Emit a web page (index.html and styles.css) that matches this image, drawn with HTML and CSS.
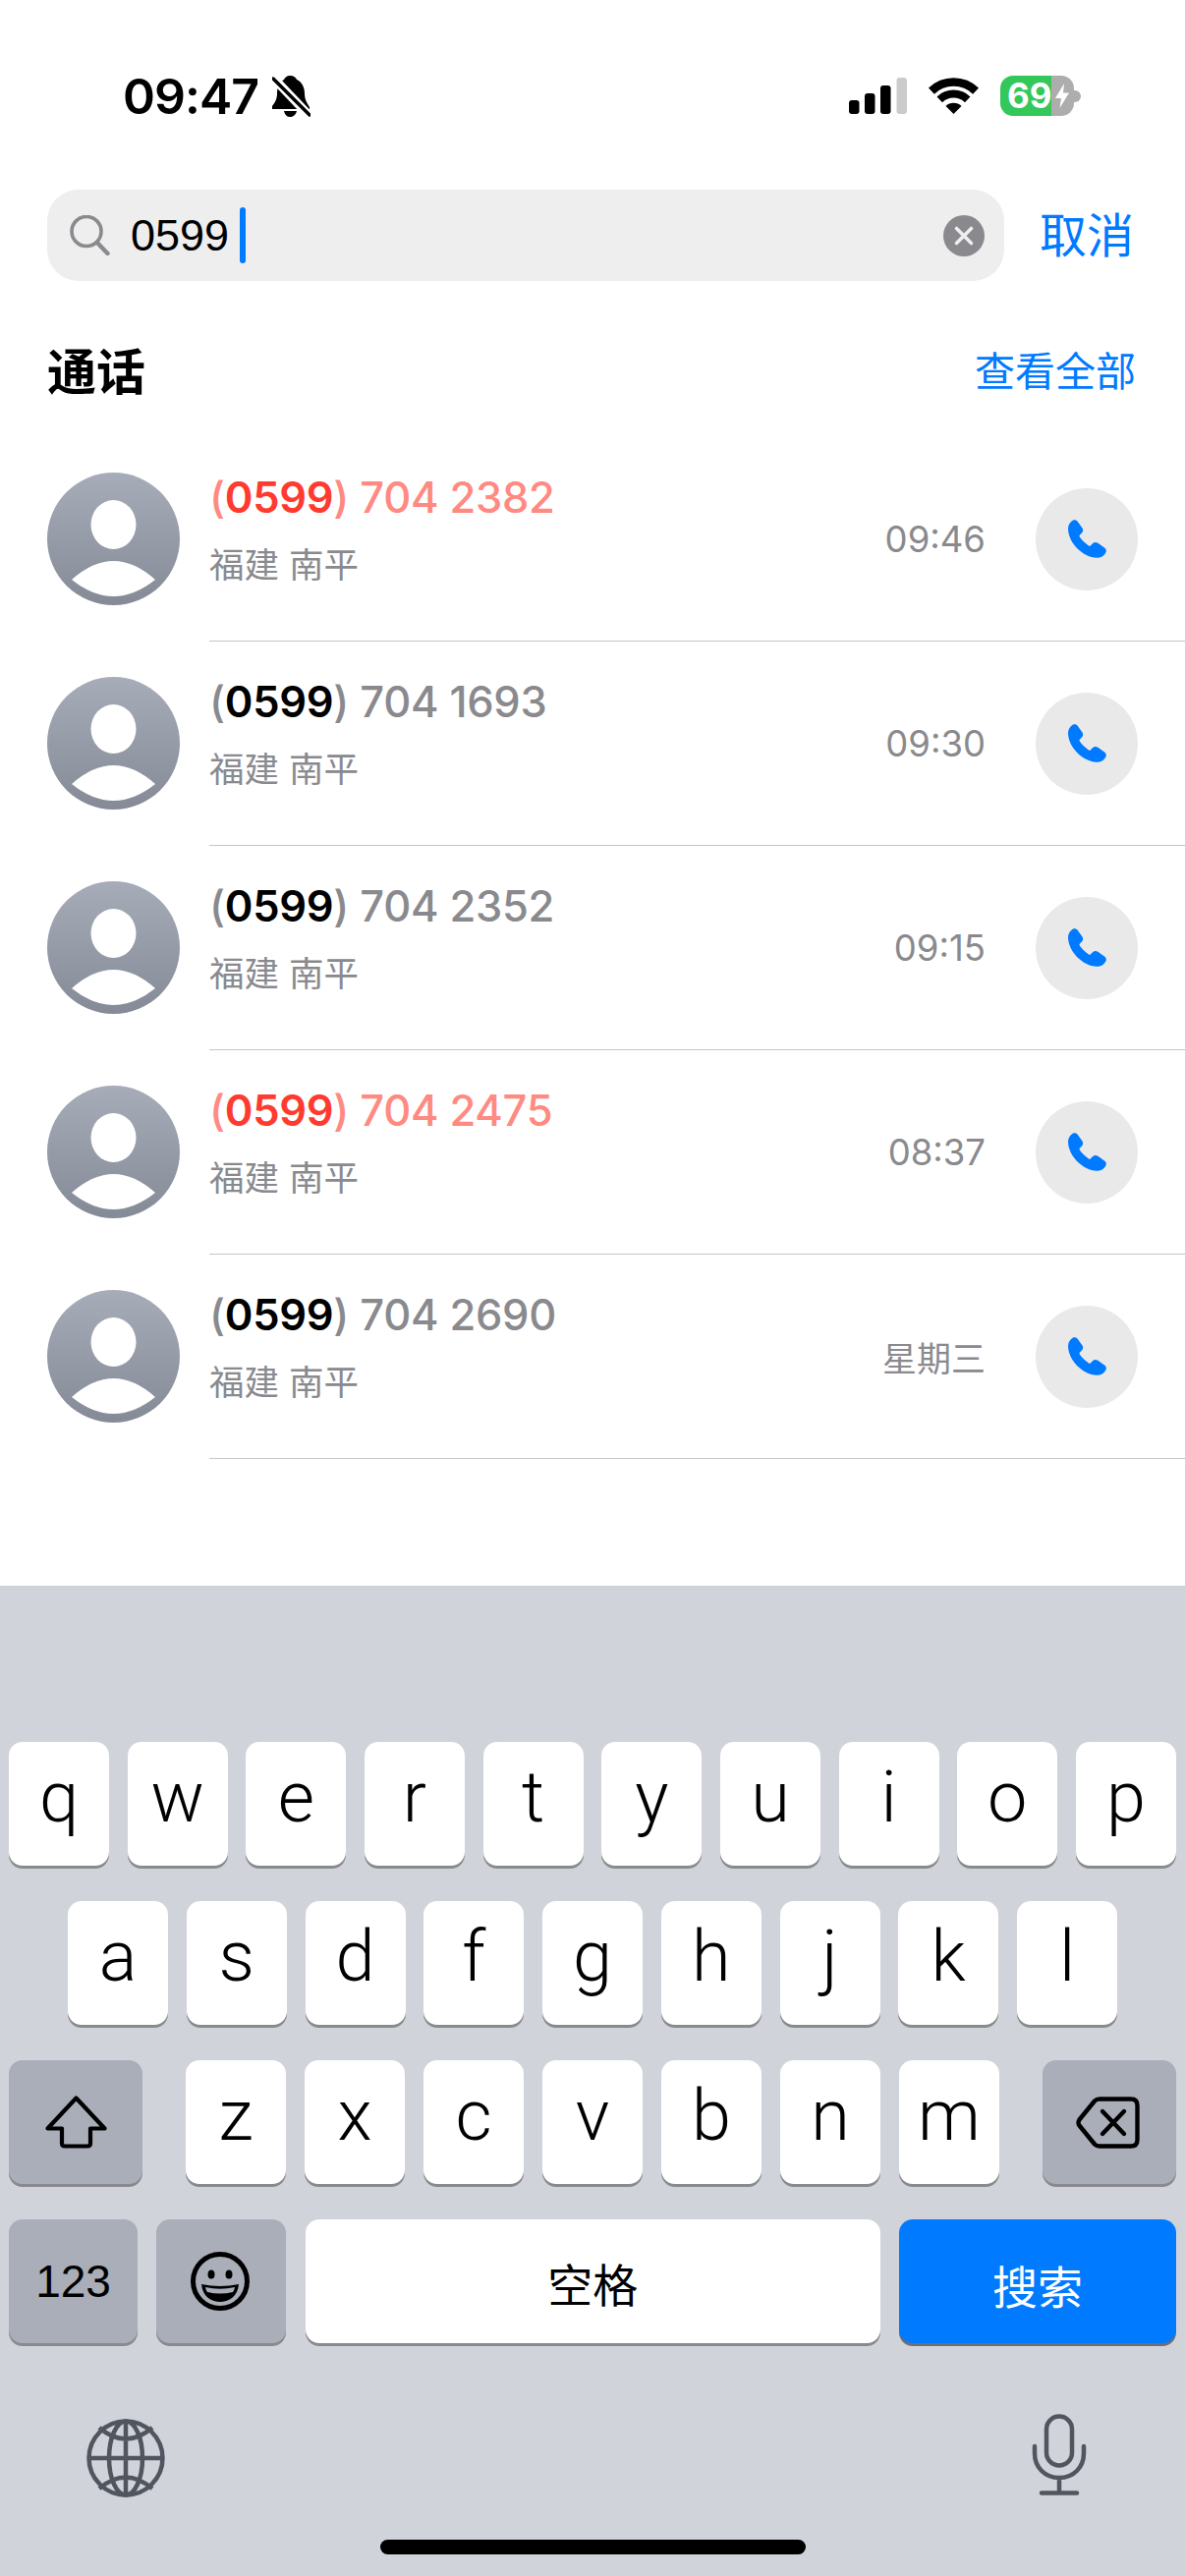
FILE: index.html
```html
<!DOCTYPE html>
<html lang="zh-Hans">
<head>
  <meta charset="UTF-8">
  <title>通话搜索</title>
  <link rel="stylesheet" href="styles.css">
</head>
<body>
  <div class="phone">
    <div class="status-bar">
      <div class="status-left">
        <span class="clock">09:47</span>
        <svg class="bell" viewBox="0 0 39 42">
          <path d="M18 0C22 0 24 2 25 4C30 6 33 12 33 18C33 24 35 27 38 32L38 34L0 34L0 31C3 27 5 24 5 18C5 12 8 6 12 4C13 2 15 0 18 0Z"/>
          <path d="M12 36H25C24 40 21 42 18 42C15 42 13 40 12 36Z"/>
          <path d="M-1 0L39 42" stroke="#fff" stroke-width="9"/>
          <path d="M1 3L38 40" stroke="#000" stroke-width="3.4" stroke-linecap="round"/>
        </svg>
      </div>
      <div class="status-right">
        <svg class="signal" viewBox="0 0 59 37">
          <rect x="0" y="23" width="10.5" height="14" rx="3"/>
          <rect x="16" y="16" width="10.5" height="21" rx="3"/>
          <rect x="32" y="8" width="10.5" height="29" rx="3"/>
          <rect x="48.5" y="0" width="10.5" height="37" rx="3" fill="#cbcbcb"/>
        </svg>
        <svg class="wifi" viewBox="0 0 51 37">
          <path d="M2.9 13.6A32.5 32.5 0 0 1 48.1 13.6" fill="none" stroke="#000" stroke-width="8.5"/>
          <path d="M11.3 22.3A20.5 20.5 0 0 1 39.7 22.3" fill="none" stroke="#000" stroke-width="8"/>
          <path d="M25.5 37L17.5 29A11.3 11.3 0 0 1 33.5 29Z"/>
        </svg>
        <div class="battery">
          <span class="battery-level">69</span>
          <svg class="bolt" viewBox="0 0 14 25"><path d="M9 0L0 15H6L4.500 25L14 9.500H8Z"/></svg>
        </div>
        <span class="battery-nub"></span>
      </div>
    </div>

    <div class="search-row">
      <div class="search-box">
        <svg class="search-icon" viewBox="0 0 41 41">
          <circle cx="17" cy="16.500" r="15" fill="none" stroke="#8a8a8e" stroke-width="3.600"/>
          <path d="M28 28L38.500 39" stroke="#8a8a8e" stroke-width="4.400" stroke-linecap="round"/>
        </svg>
        <span class="search-text">0599</span>
        <span class="caret"></span>
        <svg class="clear-icon" viewBox="0 0 42 42">
          <circle cx="21" cy="21" r="21" fill="#8a8a8e"/>
          <path d="M13.500 13.500L28.500 28.500M28.500 13.500L13.500 28.500" stroke="#eee" stroke-width="3.600" stroke-linecap="round"/>
        </svg>
      </div>
      <span class="cancel">取消</span>
    </div>

    <div class="section-head">
      <span class="section-title">通话</span>
      <span class="section-link">查看全部</span>
    </div>

    <div class="call-list">
      <div class="call-row">
        <div class="avatar">
          <svg viewBox="0 0 135 135"><ellipse cx="67.500" cy="53" rx="23" ry="25" fill="#fff"/><path d="M25 109Q67.500 71 110 109Q67.500 143 25 109Z" fill="#fff"/></svg>
        </div>
        <div class="call-main">
          <div class="call-info">
            <div class="number missed"><span class="dim">(</span>0599<span class="dim">) 704 2382</span></div>
            <div class="place">福建 南平</div>
          </div>
          <span class="call-time">09:46</span>
          <div class="call-btn">
            <svg viewBox="0 0 117 116"><path d="M14 2C20-1 26 1 30 6L43 24C47 30 46 35 42 40L36 46C34 48 34 50 36 53C42 62 52 72 62 78C65 80 67 80 69 78L75 72C80 68 85 67 91 71L110 84C116 88 118 94 115 100C110 110 100 116 88 116C45 114 2 72 0 28C0 16 6 7 14 2Z"/></svg>
          </div>
        </div>
      </div>

      <div class="call-row">
        <div class="avatar">
          <svg viewBox="0 0 135 135"><ellipse cx="67.500" cy="53" rx="23" ry="25" fill="#fff"/><path d="M25 109Q67.500 71 110 109Q67.500 143 25 109Z" fill="#fff"/></svg>
        </div>
        <div class="call-main">
          <div class="call-info">
            <div class="number"><span class="dim">(</span>0599<span class="dim">) 704 1693</span></div>
            <div class="place">福建 南平</div>
          </div>
          <span class="call-time">09:30</span>
          <div class="call-btn">
            <svg viewBox="0 0 117 116"><path d="M14 2C20-1 26 1 30 6L43 24C47 30 46 35 42 40L36 46C34 48 34 50 36 53C42 62 52 72 62 78C65 80 67 80 69 78L75 72C80 68 85 67 91 71L110 84C116 88 118 94 115 100C110 110 100 116 88 116C45 114 2 72 0 28C0 16 6 7 14 2Z"/></svg>
          </div>
        </div>
      </div>

      <div class="call-row">
        <div class="avatar">
          <svg viewBox="0 0 135 135"><ellipse cx="67.500" cy="53" rx="23" ry="25" fill="#fff"/><path d="M25 109Q67.500 71 110 109Q67.500 143 25 109Z" fill="#fff"/></svg>
        </div>
        <div class="call-main">
          <div class="call-info">
            <div class="number"><span class="dim">(</span>0599<span class="dim">) 704 2352</span></div>
            <div class="place">福建 南平</div>
          </div>
          <span class="call-time">09:15</span>
          <div class="call-btn">
            <svg viewBox="0 0 117 116"><path d="M14 2C20-1 26 1 30 6L43 24C47 30 46 35 42 40L36 46C34 48 34 50 36 53C42 62 52 72 62 78C65 80 67 80 69 78L75 72C80 68 85 67 91 71L110 84C116 88 118 94 115 100C110 110 100 116 88 116C45 114 2 72 0 28C0 16 6 7 14 2Z"/></svg>
          </div>
        </div>
      </div>

      <div class="call-row">
        <div class="avatar">
          <svg viewBox="0 0 135 135"><ellipse cx="67.500" cy="53" rx="23" ry="25" fill="#fff"/><path d="M25 109Q67.500 71 110 109Q67.500 143 25 109Z" fill="#fff"/></svg>
        </div>
        <div class="call-main">
          <div class="call-info">
            <div class="number missed"><span class="dim">(</span>0599<span class="dim">) 704 2475</span></div>
            <div class="place">福建 南平</div>
          </div>
          <span class="call-time">08:37</span>
          <div class="call-btn">
            <svg viewBox="0 0 117 116"><path d="M14 2C20-1 26 1 30 6L43 24C47 30 46 35 42 40L36 46C34 48 34 50 36 53C42 62 52 72 62 78C65 80 67 80 69 78L75 72C80 68 85 67 91 71L110 84C116 88 118 94 115 100C110 110 100 116 88 116C45 114 2 72 0 28C0 16 6 7 14 2Z"/></svg>
          </div>
        </div>
      </div>

      <div class="call-row">
        <div class="avatar">
          <svg viewBox="0 0 135 135"><ellipse cx="67.500" cy="53" rx="23" ry="25" fill="#fff"/><path d="M25 109Q67.500 71 110 109Q67.500 143 25 109Z" fill="#fff"/></svg>
        </div>
        <div class="call-main">
          <div class="call-info">
            <div class="number"><span class="dim">(</span>0599<span class="dim">) 704 2690</span></div>
            <div class="place">福建 南平</div>
          </div>
          <span class="call-time call-day">星期三</span>
          <div class="call-btn">
            <svg viewBox="0 0 117 116"><path d="M14 2C20-1 26 1 30 6L43 24C47 30 46 35 42 40L36 46C34 48 34 50 36 53C42 62 52 72 62 78C65 80 67 80 69 78L75 72C80 68 85 67 91 71L110 84C116 88 118 94 115 100C110 110 100 116 88 116C45 114 2 72 0 28C0 16 6 7 14 2Z"/></svg>
          </div>
        </div>
      </div>
    </div>

    <div class="keyboard">
      <div class="key-row">
        <div class="key">q</div><div class="key">w</div><div class="key">e</div><div class="key">r</div><div class="key">t</div>
        <div class="key">y</div><div class="key">u</div><div class="key">i</div><div class="key">o</div><div class="key">p</div>
      </div>
      <div class="key-row row-middle">
        <div class="key">a</div><div class="key">s</div><div class="key">d</div><div class="key">f</div><div class="key">g</div>
        <div class="key">h</div><div class="key">j</div><div class="key">k</div><div class="key">l</div>
      </div>
      <div class="key-row">
        <div class="key key-fn key-shift">
          <svg class="shift-icon" viewBox="0 0 63 54">
            <path d="M31.500 2.500L60.500 33.500H46V48.500Q46 51.500 43 51.500H20Q17 51.500 17 48.500V33.500H2.500Z" fill="none" stroke="#000" stroke-width="4.200" stroke-linejoin="round"/>
          </svg>
        </div>
        <div class="key-group">
          <div class="key">z</div><div class="key">x</div><div class="key">c</div><div class="key">v</div>
          <div class="key">b</div><div class="key">n</div><div class="key">m</div>
        </div>
        <div class="key key-fn key-shift">
          <svg class="delete-icon" viewBox="0 0 65 53">
            <path d="M24 2.500H56Q62.500 2.500 62.500 9V44Q62.500 50.500 56 50.500H24Q21 50.500 19 48.500L3.500 29.500Q1.500 26.500 3.500 23.500L19 4.500Q21 2.500 24 2.500Z" fill="none" stroke="#000" stroke-width="4.400" stroke-linejoin="round"/>
            <path d="M27 15L49 38M49 15L27 38" stroke="#000" stroke-width="4.400" stroke-linecap="round"/>
          </svg>
        </div>
      </div>
      <div class="key-row">
        <div class="key key-fn key-num">123</div>
        <div class="key key-fn key-emoji">
          <svg class="emoji-icon" viewBox="0 0 60 60">
            <circle cx="30" cy="30" r="27.500" fill="none" stroke="#000" stroke-width="5"/>
            <ellipse cx="21" cy="23" rx="3.500" ry="4.500"/>
            <ellipse cx="39" cy="23" rx="3.500" ry="4.500"/>
            <path d="M11 33Q30 37 49 33C48 46 38 51 30 51C22 51 12 46 11 33Z"/>
            <path d="M15 36Q30 39.500 45 36Q44.500 39 43 41Q30 44 17 41Q15.500 39 15 36Z" fill="#a9aeb9"/>
          </svg>
        </div>
        <div class="key key-space">空格</div>
        <div class="key key-search">搜索</div>
      </div>
      <div class="keyboard-bottom">
        <svg class="globe-icon" viewBox="0 0 80 80" fill="none" stroke="#50555f" stroke-width="4.500">
          <circle cx="40" cy="40" r="37.500"/>
          <ellipse cx="40" cy="40" rx="17" ry="37.500"/>
          <path d="M40 2V78M2 40H78M13 9Q40 32 67 9M13 71Q40 48 67 71"/>
        </svg>
        <svg class="mic-icon" viewBox="0 0 56 83" fill="none" stroke="#50555f" stroke-width="4.500" stroke-linecap="round">
          <rect x="15" y="2.500" width="26" height="50" rx="13"/>
          <path d="M3 33V40C3 54 13 65 28 65C43 65 53 54 53 40V33M28 65V80.500M10 80.500H46"/>
        </svg>
      </div>
      <div class="home-bar"></div>
    </div>
  </div>
</body>
</html>
```

FILE: styles.css
```css
* {
  box-sizing: border-box;
}

body {
  margin: 0;
  background: #fff;
  font-family: Inter, "Noto Sans CJK SC", sans-serif;
  color: #000;
}

.phone {
  width: 1206px;
  height: 2622px;
  display: flex;
  flex-direction: column;
  overflow: hidden;
}

/* status bar */
.status-bar {
  height: 193px;
  padding: 77px 106px 0 125px;
  display: flex;
  justify-content: space-between;
  align-items: flex-start;
}

.status-left {
  display: flex;
  align-items: center;
  gap: 14px;
  height: 42px;
}

.clock {
  font-size: 50px;
  font-weight: 600;
  letter-spacing: -1px;
  line-height: 42px;
}

.bell {
  width: 39px;
  height: 42px;
  overflow: hidden;
}

.status-right {
  display: flex;
  align-items: center;
  height: 41px;
}

.signal {
  width: 59px;
  height: 37px;
}

.wifi {
  width: 51px;
  height: 37px;
  margin-left: 22px;
}

.battery {
  width: 75px;
  height: 41px;
  margin-left: 22px;
  padding-left: 7px;
  display: flex;
  align-items: center;
  border-radius: 13px;
  background: linear-gradient(90deg, #34c759 52px, #adadad 52px);
}

.battery-level {
  width: 49px;
  font-size: 35px;
  font-weight: 700;
  color: #fff;
  line-height: 41px;
}

.bolt {
  width: 14px;
  height: 25px;
  fill: #fff;
}

.battery-nub {
  width: 7px;
  height: 12px;
  border-radius: 0 6px 6px 0;
  background: #adadad;
}

/* search */
.search-row {
  height: 93px;
  padding-left: 48px;
  display: flex;
  align-items: center;
}

.search-box {
  width: 974px;
  height: 93px;
  padding: 0 20px 0 23px;
  display: flex;
  align-items: center;
  border-radius: 32px;
  background: #eeeeef;
}

.search-icon {
  width: 41px;
  height: 41px;
}

.search-text {
  margin-left: 21px;
  font-family: "Liberation Sans", sans-serif;
  font-size: 45px;
  line-height: 60px;
}

.caret {
  width: 6px;
  height: 57px;
  margin-left: 11px;
  border-radius: 3px;
  background: #007aff;
}

.clear-icon {
  width: 42px;
  height: 42px;
  margin-left: auto;
}

.cancel {
  margin-left: 36px;
  font-size: 48px;
  line-height: 60px;
  color: #007aff;
}

/* section header */
.section-head {
  padding: 40px 50px 21px 48px;
  height: 159px;
  display: flex;
  justify-content: space-between;
  align-items: center;
}

.section-title {
  font-size: 50px;
  font-weight: 700;
}

.section-link {
  font-size: 41px;
  color: #007aff;
}

/* call list */
.call-row {
  height: 208px;
  padding-left: 48px;
  display: flex;
  align-items: center;
}

.avatar {
  width: 135px;
  height: 135px;
  flex: none;
  margin-bottom: 1px;
  border-radius: 50%;
  background: linear-gradient(#a7acb9, #858a97);
}

.avatar svg {
  display: block;
  width: 135px;
  height: 135px;
}

.call-main {
  flex: 1;
  height: 208px;
  margin-left: 30px;
  padding-right: 48px;
  display: flex;
  align-items: center;
  border-bottom: 1px solid #c6c6c8;
}

.call-info {
  flex: 1;
  padding-bottom: 21px;
}

.number {
  font-size: 43.5px;
  font-weight: 600;
  letter-spacing: -0.3px;
  line-height: 60px;
}

.number.missed {
  color: #ff3b30;
}

.number .dim {
  color: #8a8a8e;
  font-weight: 550;
}

.number.missed .dim {
  color: #ff8a82;
}

.place {
  margin-top: 15px;
  font-size: 35.5px;
  line-height: 50px;
  color: #8a8a8e;
}

.call-time {
  margin-right: 51px;
  font-size: 36.5px;
  color: #8a8a8e;
}

.call-day {
  font-size: 35px;
}

.call-btn {
  width: 104px;
  height: 104px;
  flex: none;
  display: flex;
  align-items: center;
  justify-content: center;
  border-radius: 50%;
  background: #e9e9ea;
}

.call-btn svg {
  width: 39px;
  height: 39px;
  fill: #007aff;
}

/* keyboard */
.keyboard {
  margin-top: auto;
  height: 1008px;
  padding: 159px 9px 0;
  display: flex;
  flex-direction: column;
  gap: 36px;
  background: #d0d3da;
}

.key-row {
  height: 126px;
  display: flex;
  justify-content: space-between;
}

.row-middle {
  padding: 0 60px;
}

.key {
  width: 102px;
  height: 126px;
  flex: none;
  padding-bottom: 13px;
  display: flex;
  align-items: center;
  justify-content: center;
  border-radius: 14px;
  background: #fff;
  box-shadow: 0 3px 0 #898a8d;
  font-family: Roboto, "Noto Sans CJK SC", sans-serif;
  font-size: 72px;
  font-weight: 350;
  line-height: 1;
}

.key-group {
  width: 828px;
  display: flex;
  justify-content: space-between;
}

.key-fn {
  background: #a9aeb9;
}

.key-shift {
  width: 136px;
  padding-bottom: 0;
}

.shift-icon {
  width: 63px;
  height: 54px;
}

.delete-icon {
  width: 65px;
  height: 53px;
  margin-right: 3px;
}

.key-num {
  width: 131px;
  padding-bottom: 0;
  font-family: "Liberation Sans", sans-serif;
  font-size: 46px;
  font-weight: 400;
}

.key-emoji {
  width: 132px;
  padding-bottom: 0;
}

.emoji-icon {
  width: 60px;
  height: 60px;
  margin-right: 3px;
}

.key-space {
  width: 585px;
  padding: 9px 0 0;
  font-size: 46px;
  font-weight: 400;
}

.key-search {
  width: 282px;
  padding: 14px 0 0;
  font-size: 46px;
  font-weight: 400;
  color: #fff;
  background: #007aff;
  box-shadow: 0 3px 0 #6e6e73;
}

.keyboard-bottom {
  margin-top: 36px;
  padding: 0 91px 0 79px;
  display: flex;
  justify-content: space-between;
  align-items: flex-start;
}

.globe-icon {
  width: 80px;
  height: 80px;
  margin-top: 5px;
}

.mic-icon {
  width: 56px;
  height: 83px;
}

.home-bar {
  width: 433px;
  height: 15px;
  margin: 7px auto 0;
  border-radius: 8px;
  background: #000;
}
```
